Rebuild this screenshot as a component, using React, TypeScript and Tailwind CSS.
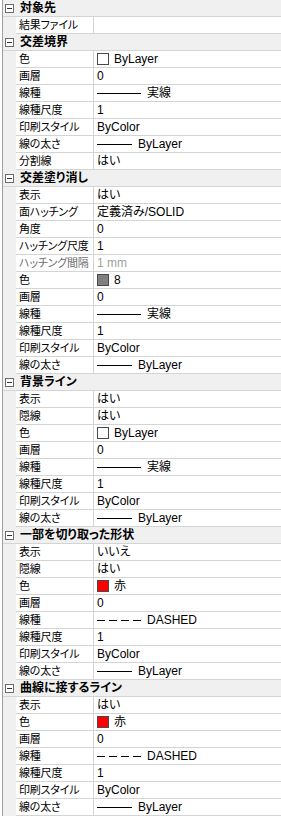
import React from 'react'

type Row = { name: string; value?: React.ReactNode; dim?: boolean }
type Section = { title: string; rows: Row[] }

const Swatch = ({ color, label }: { color: string; label: string }) => (
  <span className="flex items-center gap-[5px]">
    <span className="block h-[12px] w-[12px] border border-[#4a4a4a]" style={{ backgroundColor: color }} />
    <span>{label}</span>
  </span>
)

// 線種 / 線の太さ のサンプル線
const LineVal = ({ label, dashed, width = 44 }: { label: string; dashed?: boolean; width?: number }) => (
  <span className="flex items-center gap-[6px]">
    <svg width={width} height="3" className="mt-[1px]">
      <line x1="0" y1="1.5" x2={width} y2="1.5" stroke="#000" strokeWidth="1" strokeDasharray={dashed ? '8 4' : undefined} />
    </svg>
    <span>{label}</span>
  </span>
)

const solid = <LineVal label="実線" />
const dashed = <LineVal label="DASHED" dashed />
const weight = <LineVal label="ByLayer" width={35} />

const sections: Section[] = [
  { title: '対象先', rows: [{ name: '結果ファイル' }] },
  {
    title: '交差境界',
    rows: [
      { name: '色', value: <Swatch color="#fff" label="ByLayer" /> },
      { name: '画層', value: '0' },
      { name: '線種', value: solid },
      { name: '線種尺度', value: '1' },
      { name: '印刷スタイル', value: 'ByColor' },
      { name: '線の太さ', value: weight },
      { name: '分割線', value: 'はい' },
    ],
  },
  {
    title: '交差塗り消し',
    rows: [
      { name: '表示', value: 'はい' },
      { name: '面ハッチング', value: '定義済み/SOLID' },
      { name: '角度', value: '0' },
      { name: 'ハッチング尺度', value: '1' },
      { name: 'ハッチング間隔', value: '1 mm', dim: true },
      { name: '色', value: <Swatch color="#808080" label="8" /> },
      { name: '画層', value: '0' },
      { name: '線種', value: solid },
      { name: '線種尺度', value: '1' },
      { name: '印刷スタイル', value: 'ByColor' },
      { name: '線の太さ', value: weight },
    ],
  },
  {
    title: '背景ライン',
    rows: [
      { name: '表示', value: 'はい' },
      { name: '隠線', value: 'はい' },
      { name: '色', value: <Swatch color="#fff" label="ByLayer" /> },
      { name: '画層', value: '0' },
      { name: '線種', value: solid },
      { name: '線種尺度', value: '1' },
      { name: '印刷スタイル', value: 'ByColor' },
      { name: '線の太さ', value: weight },
    ],
  },
  {
    title: '一部を切り取った形状',
    rows: [
      { name: '表示', value: 'いいえ' },
      { name: '隠線', value: 'はい' },
      { name: '色', value: <Swatch color="#ff0000" label="赤" /> },
      { name: '画層', value: '0' },
      { name: '線種', value: dashed },
      { name: '線種尺度', value: '1' },
      { name: '印刷スタイル', value: 'ByColor' },
      { name: '線の太さ', value: weight },
    ],
  },
  {
    title: '曲線に接するライン',
    rows: [
      { name: '表示', value: 'はい' },
      { name: '色', value: <Swatch color="#ff0000" label="赤" /> },
      { name: '画層', value: '0' },
      { name: '線種', value: dashed },
      { name: '線種尺度', value: '1' },
      { name: '印刷スタイル', value: 'ByColor' },
      { name: '線の太さ', value: weight },
    ],
  },
]

const Collapse = () => (
  <span className="flex h-[9px] w-[9px] items-center justify-center border border-[#6b6b6b] bg-white">
    <span className="block h-px w-[5px] bg-[#333]" />
  </span>
)

export default function App() {
  return (
    <div className="w-[281px] bg-white pb-3 pl-[2px] text-[12px] leading-[16px] text-black font-[family-name:Liberation_Sans,Noto_Sans_CJK_JP,sans-serif] [font-feature-settings:'palt']">
      <div className="border-l border-[#a0a0a0]">
        {sections.map((s) => (
          <div key={s.title}>
            {/* 見出し行 */}
            <div className="flex h-[17px] items-center gap-[6px] border-b border-[#d4d4d4] bg-[#f0f0f0] pl-[2px] font-bold">
              <Collapse />
              <span>{s.title}</span>
            </div>
            {s.rows.map((r, i) => (
              <div key={i} className="flex h-[17px] bg-[#f0f0f0]">
                <div className="w-[13px] shrink-0" />
                <div
                  className={
                    'w-[78px] shrink-0 overflow-hidden whitespace-nowrap border-b border-r border-[#d4d4d4] bg-white pl-[3px] text-[11px] tracking-[-0.2px] ' +
                    (r.dim ? 'text-[#6d6d6d]' : '')
                  }
                >
                  {r.name}
                </div>
                <div
                  className={
                    'flex flex-1 items-center overflow-hidden whitespace-nowrap border-b border-[#d4d4d4] bg-white pl-[3px] ' +
                    (r.dim ? 'text-[#a0a0a0]' : '')
                  }
                >
                  {r.value}
                </div>
              </div>
            ))}
          </div>
        ))}
      </div>
    </div>
  )
}
